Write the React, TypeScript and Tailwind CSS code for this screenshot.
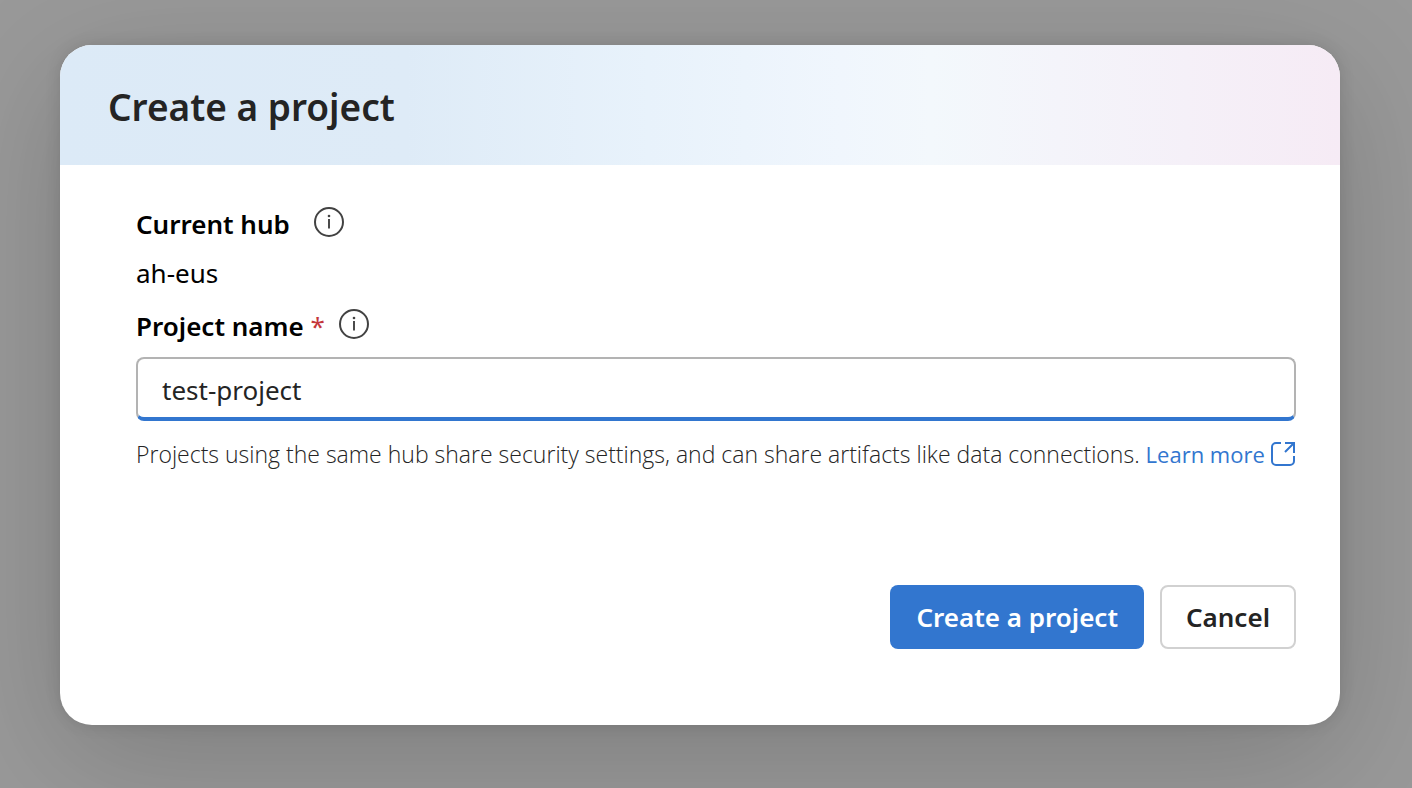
import React from "react";

function InfoIcon() {
  return (
    <svg viewBox="0 0 30 30" className="size-[30px]" fill="none" aria-hidden="true">
      <circle cx="15" cy="15" r="14" stroke="#424242" strokeWidth="2" />
      <circle cx="15" cy="9" r="1.3" fill="#424242" />
      <path d="M15 12v9.5" stroke="#424242" strokeWidth="1.9" />
    </svg>
  );
}

function OpenIcon() {
  return (
    <svg viewBox="1 1 24 24" className="size-6" fill="none" stroke="#3276cf" strokeWidth="2" aria-hidden="true">
      <path d="M11 2H6a4 4 0 0 0-4 4v14a4 4 0 0 0 4 4h14a4 4 0 0 0 4-4v-5" />
      <path d="M15 2h9v10M24 2 15 11" />
    </svg>
  );
}

export default function App() {
  return (
    <div className="min-h-screen bg-[#999999] px-[60px] pr-[72px] pt-[45px] pb-[63px] font-['Noto_Sans','Open_Sans',sans-serif]">
      <main role="dialog" aria-labelledby="title" className="overflow-hidden rounded-[32px] bg-white pb-[76px] shadow-[0_32px_128px_rgba(0,0,0,0.18),0_0_16px_rgba(0,0,0,0.12)]">
        <header className="flex h-[120px] items-center bg-[linear-gradient(90deg,#dceaf7_0%,#deebf7_27%,#e8f2fb_46%,#f0f6fd_61%,#f3f8fc_68%,#f5f0f8_88%,#f6ebf5_100%)] px-12">
          <h1 id="title" className="pt-1 text-[37px] leading-[52px] font-semibold text-[#242424]">Create a project</h1>
        </header>
        <form className="pt-9 pr-11 pl-[76px]" onSubmit={(e) => e.preventDefault()}>
          <div className="flex h-[46px] items-center gap-6 text-[26px] font-semibold">
            <span>Current hub</span>
            <button type="button" aria-label="About the current hub" className="pb-1"><InfoIcon /></button>
          </div>
          <p className="pb-1 text-[26px] leading-[52px]">ah-eus</p>
          <div className="flex h-[46px] items-center gap-3.5 text-[26px] font-semibold">
            <label htmlFor="name">Project name <span className="font-normal text-[#c4373b]">*</span></label>
            <button type="button" aria-label="About the project name" className="pb-1"><InfoIcon /></button>
          </div>
          <input id="name" required defaultValue="test-project" className="mt-2 block h-16 w-full rounded-lg border-2 border-b-4 border-[#b3b3b3] border-b-[#3276cf] px-6 pt-1 text-[26px] text-[#242424] outline-none" />
          <p className="mt-[15px] font-['Open_Sans','Noto_Sans',sans-serif] text-[23px] leading-9 font-light text-[#242424]">
            Projects using the same hub share security settings, and can share artifacts like data connections.{" "}
            <a href="#learn" className="text-[22px] font-normal text-[#3276cf]">Learn more <span className="inline-block align-[-3px] leading-none"><OpenIcon /></span></a>
          </p>
          <div className="mt-[113px] flex justify-end gap-4 text-[26px] font-semibold">
            <button type="submit" className="h-16 rounded-lg bg-[#3276cf] px-[26px] text-white">Create a project</button>
            <button type="button" className="h-16 rounded-lg border-2 border-[#d1d1d1] px-6 text-[#242424]">Cancel</button>
          </div>
        </form>
      </main>
    </div>
  );
}
